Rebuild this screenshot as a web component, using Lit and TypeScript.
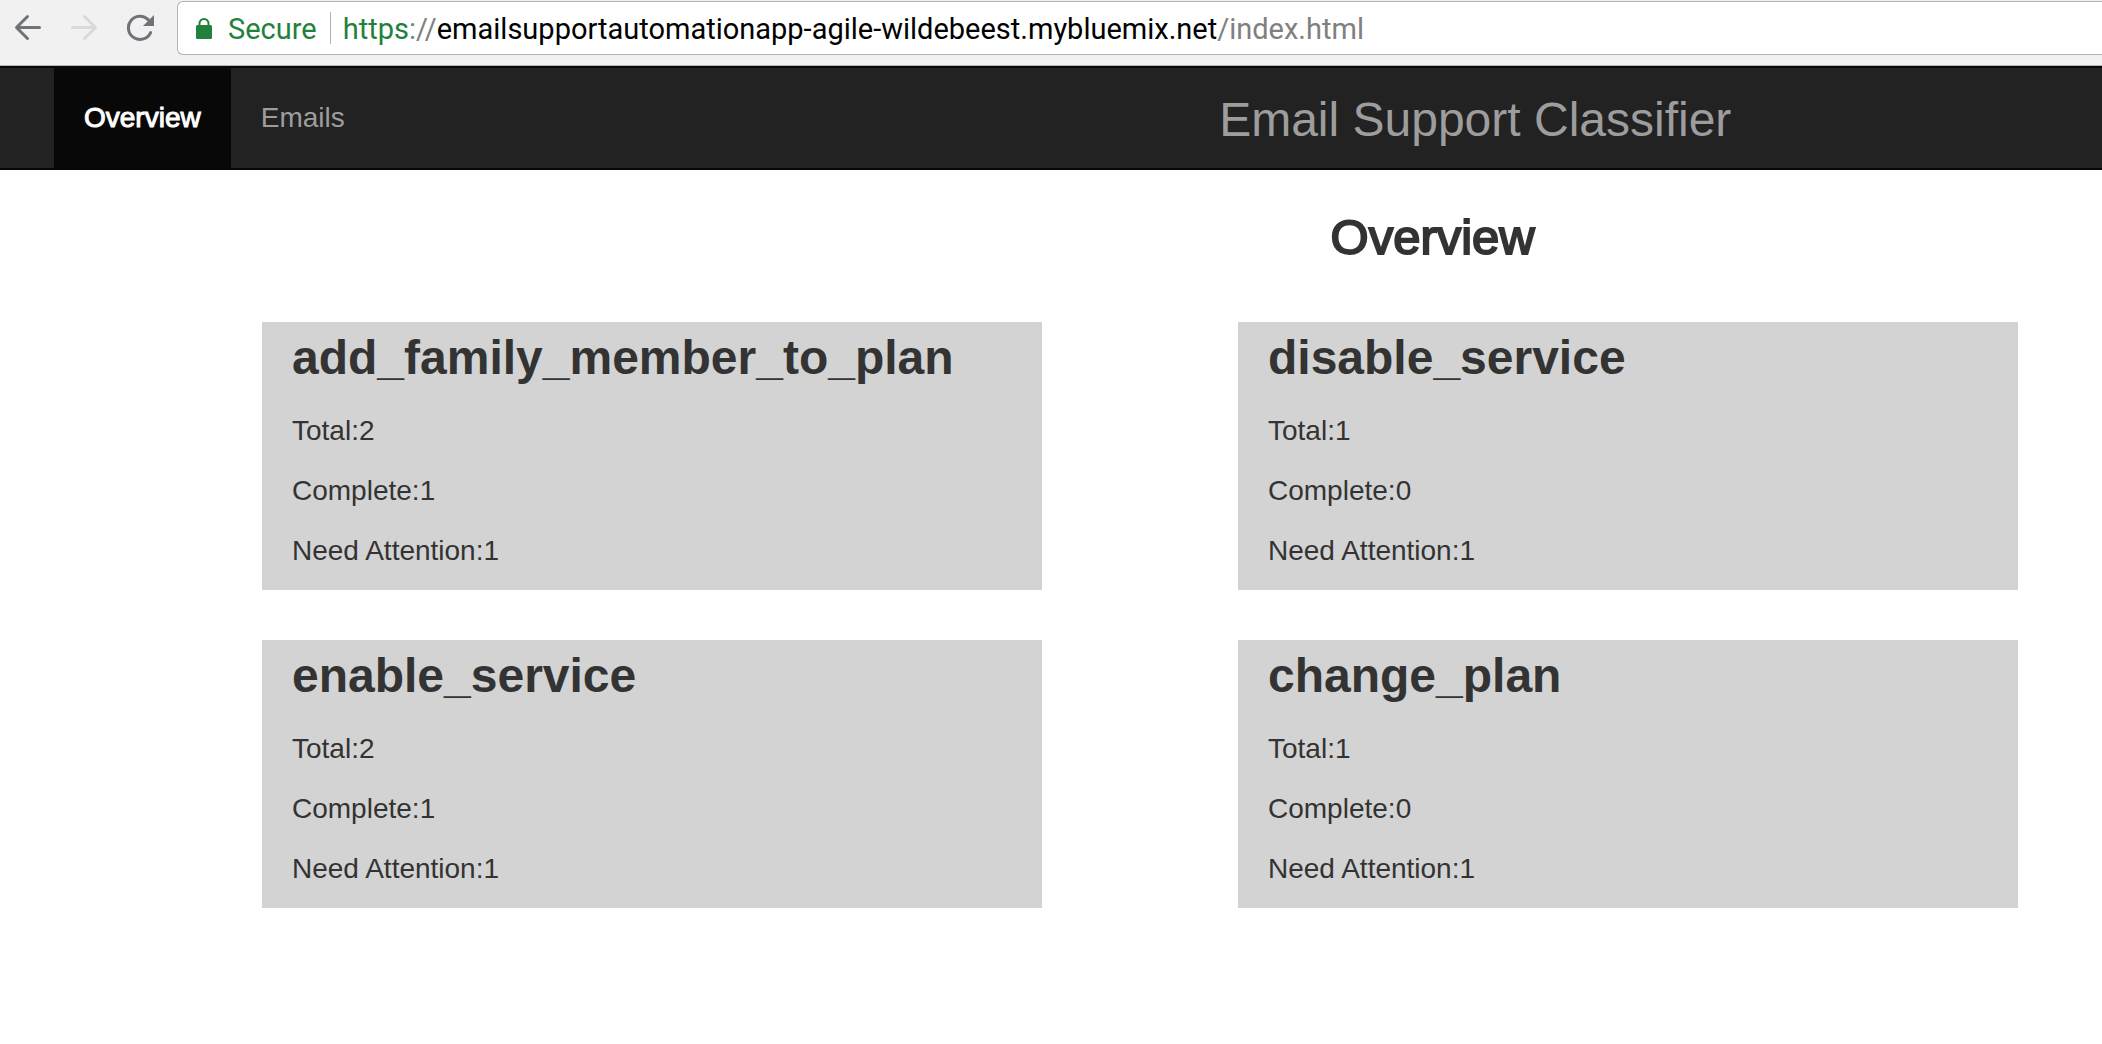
import { LitElement, html, css } from "lit";
import { customElement, property } from "lit/decorators.js";

interface Category {
  name: string;
  total: number;
  complete: number;
  attention: number;
}

const categories: Category[] = [
  { name: "add_family_member_to_plan", total: 2, complete: 1, attention: 1 },
  { name: "disable_service", total: 1, complete: 0, attention: 1 },
  { name: "enable_service", total: 2, complete: 1, attention: 1 },
  { name: "change_plan", total: 1, complete: 0, attention: 1 },
];

@customElement("browser-toolbar")
export class BrowserToolbar extends LitElement {
  static styles = css`
    :host {
      display: block;
    }
    .toolbar {
      display: flex;
      align-items: center;
      padding: 1px 0 10px 14px;
      background: #f1f1f1;
      border-bottom: 1px solid #b4b4b4;
      font-family: Roboto, "Liberation Sans", sans-serif;
      font-size: 29px;
      line-height: 40px;
      overflow: hidden;
    }
    .history {
      display: flex;
      gap: 28px;
      padding-right: 23px;
    }
    .tool,
    .security {
      margin: 0;
      padding: 0;
      border: 0;
      background: none;
      font: inherit;
      cursor: pointer;
    }
    .tool {
      display: flex;
      color: #6f7379;
    }
    .tool:disabled {
      color: #d8d9db;
      cursor: default;
    }
    .stroke {
      fill: none;
      stroke: currentColor;
      stroke-width: 3;
      stroke-linecap: round;
      stroke-linejoin: round;
    }
    .fill {
      fill: currentColor;
    }
    .omnibox {
      display: flex;
      align-items: center;
      flex: 1;
      min-width: 0;
      box-sizing: border-box;
      height: 54px;
      padding-left: 17px;
      background: #fff;
      border: 1px solid #b4b4b4;
      border-right: 0;
      border-radius: 6px 0 0 6px;
    }
    .security {
      display: flex;
      align-items: center;
      gap: 15px;
      padding-right: 13px;
      color: #1f813b;
    }
    .label,
    .address {
      padding-top: 2px;
    }
    .rule {
      width: 1px;
      height: 32px;
      background: #b0b0b0;
    }
    .address {
      padding-left: 12px;
      white-space: nowrap;
      color: #808080;
      outline: none;
    }
    .scheme {
      color: #1f813b;
    }
    .domain {
      color: #000;
    }
  `;

  render() {
    return html`
      <div class="toolbar">
        <div class="history">
          <button class="tool" type="button" aria-label="Back">
            <svg width="28" height="28" viewBox="0 0 28 28">
              <path class="stroke" d="M25.5 13.5H3M13.5 2.5L2.5 13.5L13.5 24.5" />
            </svg>
          </button>
          <button class="tool" type="button" aria-label="Forward" disabled>
            <svg width="28" height="28" viewBox="0 0 28 28">
              <path class="stroke" d="M2.5 13.5H25M14.5 2.5L25.5 13.5L14.5 24.5" />
            </svg>
          </button>
          <button class="tool" type="button" aria-label="Reload">
            <svg width="28" height="28" viewBox="0 0 28 28">
              <path class="stroke" d="M24.6 18.6A11.6 11.6 0 1 1 22.2 5.6" />
              <path class="fill" d="M28 1V12H17Z" />
            </svg>
          </button>
        </div>
        <div class="omnibox">
          <button class="security" type="button">
            <svg width="18" height="24" viewBox="0 0 18 24">
              <path class="fill" d="M2.5 9H15.5Q17 9 17 10.500V21.500Q17 23 15.500 23H2.500Q1 23 1 21.500V10.500Q1 9 2.500 9Z" />
              <path fill="none" stroke="currentColor" stroke-width="2" d="M4.500 10V7.500A4.500 4.500 0 0 1 13.500 7.500V10" />
            </svg>
            <span class="label">Secure</span>
          </button>
          <span class="rule"></span>
          <div class="address" role="textbox" aria-label="Address" contenteditable="true" spellcheck="false"><span class="scheme">https</span>://<span class="domain">emailsupportautomationapp-agile-wildebeest.mybluemix.net</span>/index.html</div>
        </div>
      </div>
    `;
  }
}

@customElement("category-card")
export class CategoryCard extends LitElement {
  @property({ attribute: false }) category!: Category;

  static styles = css`
    :host {
      display: block;
    }
    .card {
      padding: 9px 30px 19px;
      background: #d3d3d3;
    }
    .name {
      margin: 0 0 27px;
      font-size: 48px;
      line-height: 53px;
      font-weight: 700;
      overflow-wrap: anywhere;
    }
    .stat {
      margin: 0 0 20px;
    }
    .stat:last-child {
      margin-bottom: 0;
    }
  `;

  render() {
    const { name, total, complete, attention } = this.category;
    return html`
      <section class="card">
        <h3 class="name">${name}</h3>
        <p class="stat">Total:${total}</p>
        <p class="stat">Complete:${complete}</p>
        <p class="stat">Need Attention:${attention}</p>
      </section>
    `;
  }
}

@customElement("app-root")
export class AppRoot extends LitElement {
  static styles = css`
    :host {
      display: block;
      min-height: 100vh;
      background: #fff;
      color: #333;
      font-family: "Liberation Sans", Arial, sans-serif;
      font-size: 28px;
      line-height: 40px;
    }
    .navbar {
      display: grid;
      grid-template-columns: 58fr 42fr;
      align-items: center;
      background: #222;
      border-top: 2px solid #080808;
      border-bottom: 2px solid #080808;
    }
    .links {
      display: flex;
      margin: 0;
      padding: 0 0 0 54px;
      list-style: none;
    }
    .link {
      display: block;
      padding: 30px;
      color: #9d9d9d;
      text-decoration: none;
    }
    .link.active {
      background: #080808;
      color: #fff;
      -webkit-text-stroke: 1px #fff;
    }
    .brand {
      padding-top: 2px;
      color: #9d9d9d;
      font-size: 48px;
      line-height: 53px;
      text-decoration: none;
      white-space: nowrap;
    }
    .content {
      padding: 41px 84px 40px 262px;
    }
    .heading {
      display: grid;
      grid-template-columns: 1fr 2fr;
      margin-bottom: 58px;
    }
    .title {
      grid-column: 2;
      margin: 0;
      font-size: 49px;
      line-height: 53px;
      font-weight: 400;
      text-align: center;
      -webkit-text-stroke: 2px #333;
    }
    .cards {
      display: grid;
      grid-template-columns: repeat(2, minmax(0, 1fr));
      gap: 50px 196px;
    }
  `;

  render() {
    return html`
      <browser-toolbar></browser-toolbar>
      <nav class="navbar">
        <ul class="links">
          <li><a class="link active" href="#overview" aria-current="page">Overview</a></li>
          <li><a class="link" href="#emails">Emails</a></li>
        </ul>
        <a class="brand" href="#overview">Email Support Classifier</a>
      </nav>
      <main class="content" id="overview">
        <div class="heading"><h2 class="title">Overview</h2></div>
        <div class="cards">
          ${categories.map((c) => html`<category-card .category=${c}></category-card>`)}
        </div>
      </main>
    `;
  }
}
